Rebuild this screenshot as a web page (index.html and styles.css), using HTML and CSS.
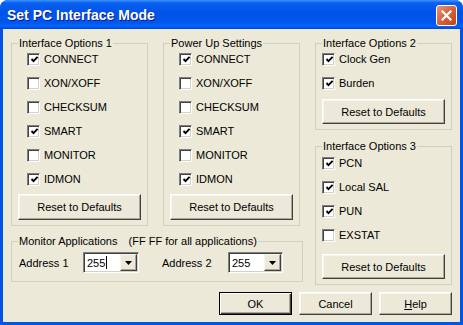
FILE: index.html
```html
<!DOCTYPE html>
<html lang="en">
<head>
    <meta charset="UTF-8">
    <title>Set PC Interface Mode</title>
    <link rel="stylesheet" href="styles.css">
</head>
<body>
    <div class="window">
        <div class="titlebar">
            <span class="title">Set PC Interface Mode</span>
            <button class="close" type="button">
                <svg width="11" height="11" viewBox="0 0 11 11"><path d="M1.5 1.5 L9.5 9.5 M9.5 1.5 L1.5 9.5" stroke="#fff" stroke-width="2.2" stroke-linecap="square"/></svg>
            </button>
        </div>

        <form class="client">
            <div class="main">
                <div class="left">
                    <div class="pair">
                        <fieldset class="group opts">
                            <legend>Interface Options 1</legend>
                            <div class="checks indent">
                                <label class="check"><span class="box on"><svg viewBox="0 0 9 9"><polyline points="1.5,4 3.5,6.2 7.6,1.8" /></svg></span>CONNECT</label>
                                <label class="check"><span class="box"></span>XON/XOFF</label>
                                <label class="check"><span class="box"></span>CHECKSUM</label>
                                <label class="check"><span class="box on"><svg viewBox="0 0 9 9"><polyline points="1.5,4 3.5,6.2 7.6,1.8" /></svg></span>SMART</label>
                                <label class="check"><span class="box"></span>MONITOR</label>
                                <label class="check"><span class="box on"><svg viewBox="0 0 9 9"><polyline points="1.5,4 3.5,6.2 7.6,1.8" /></svg></span>IDMON</label>
                            </div>
                            <button class="btn reset tall" type="button">Reset to Defaults</button>
                        </fieldset>

                        <fieldset class="group opts">
                            <legend>Power Up Settings</legend>
                            <div class="checks indent">
                                <label class="check"><span class="box on"><svg viewBox="0 0 9 9"><polyline points="1.5,4 3.5,6.2 7.6,1.8" /></svg></span>CONNECT</label>
                                <label class="check"><span class="box"></span>XON/XOFF</label>
                                <label class="check"><span class="box"></span>CHECKSUM</label>
                                <label class="check"><span class="box on"><svg viewBox="0 0 9 9"><polyline points="1.5,4 3.5,6.2 7.6,1.8" /></svg></span>SMART</label>
                                <label class="check"><span class="box"></span>MONITOR</label>
                                <label class="check"><span class="box on"><svg viewBox="0 0 9 9"><polyline points="1.5,4 3.5,6.2 7.6,1.8" /></svg></span>IDMON</label>
                            </div>
                            <button class="btn reset tall" type="button">Reset to Defaults</button>
                        </fieldset>
                    </div>

                    <fieldset class="group monitor">
                        <legend>Monitor Applications <span class="hint">(FF FF for all applications)</span></legend>
                        <div class="addr">
                            <span class="addr-label">Address 1</span>
                            <div class="combo">
                                <span class="value">255<span class="caret"></span></span>
                                <span class="drop"><svg width="7" height="4" viewBox="0 0 7 4"><path d="M0 0 H7 L3.5 4 Z" fill="#000"/></svg></span>
                            </div>
                            <span class="addr-label second">Address 2</span>
                            <div class="combo narrow">
                                <span class="value">255</span>
                                <span class="drop"><svg width="7" height="4" viewBox="0 0 7 4"><path d="M0 0 H7 L3.5 4 Z" fill="#000"/></svg></span>
                            </div>
                        </div>
                    </fieldset>
                </div>

                <div class="right">
                    <fieldset class="group">
                        <legend>Interface Options 2</legend>
                        <div class="checks">
                            <label class="check"><span class="box on"><svg viewBox="0 0 9 9"><polyline points="1.5,4 3.5,6.2 7.6,1.8" /></svg></span>Clock Gen</label>
                            <label class="check"><span class="box on"><svg viewBox="0 0 9 9"><polyline points="1.5,4 3.5,6.2 7.6,1.8" /></svg></span>Burden</label>
                        </div>
                        <button class="btn reset" type="button">Reset to Defaults</button>
                    </fieldset>

                    <fieldset class="group lower">
                        <legend>Interface Options 3</legend>
                        <div class="checks">
                            <label class="check"><span class="box on"><svg viewBox="0 0 9 9"><polyline points="1.5,4 3.5,6.2 7.6,1.8" /></svg></span>PCN</label>
                            <label class="check"><span class="box on"><svg viewBox="0 0 9 9"><polyline points="1.5,4 3.5,6.2 7.6,1.8" /></svg></span>Local SAL</label>
                            <label class="check"><span class="box on"><svg viewBox="0 0 9 9"><polyline points="1.5,4 3.5,6.2 7.6,1.8" /></svg></span>PUN</label>
                            <label class="check"><span class="box"></span>EXSTAT</label>
                        </div>
                        <button class="btn reset" type="button">Reset to Defaults</button>
                    </fieldset>
                </div>
            </div>

            <div class="actions">
                <button class="btn action default" type="submit">OK</button>
                <button class="btn action" type="button">Cancel</button>
                <button class="btn action" type="button"><u>H</u>elp</button>
            </div>
        </form>
    </div>
</body>
</html>
```

FILE: styles.css
```css
body {
    margin: 0;
    font-family: 'Liberation Sans', Arial, sans-serif;
    font-size: 11px;
    color: #000;
}

.window {
    width: 463px;
    height: 325px;
    display: flex;
    flex-direction: column;
    background-color: #0055e5;
    border-radius: 8px 8px 0 0;
    box-sizing: border-box;
}

.titlebar {
    height: 29px;
    flex: none;
    display: flex;
    align-items: center;
    padding: 0 6px 0 7px;
    border-radius: 8px 8px 0 0;
    background: linear-gradient(to bottom, #3d95ff 0%, #0a5fef 10%, #0053e8 45%, #0058ee 80%, #0066ff 90%, #0046d5 100%);
}

.title {
    flex: 1;
    color: #fff;
    font-weight: bold;
    font-size: 14px;
    text-shadow: 1px 1px #0a1883;
}

.close {
    width: 21px;
    height: 21px;
    margin-top: 2px;
    padding: 0;
    display: flex;
    align-items: center;
    justify-content: center;
    border: 1px solid #fff;
    border-radius: 3px;
    background: linear-gradient(135deg, #e7977a 0%, #d96540 45%, #c5411c 100%);
}

.client {
    flex: 1;
    margin: 0 3px 3px;
    padding: 8px 8px 7px 8px;
    background-color: #ece9d8;
    display: flex;
    flex-direction: column;
}

.main {
    display: flex;
    align-items: flex-start;
}

.left {
    width: 293px;
    display: flex;
    flex-direction: column;
}

.pair {
    display: flex;
    gap: 15px;
}

.group {
    margin: 0;
    padding: 0 6px 5px;
    border: 1px solid #d0d0bf;
    min-width: 0;
    box-sizing: border-box;
    display: flex;
    flex-direction: column;
}

.group legend {
    padding: 0 1px;
    line-height: 13px;
}

.opts {
    width: 137px;
}

.checks {
    display: flex;
    flex-direction: column;
    gap: 8px;
    padding-top: 1px;
}

.indent {
    padding-left: 9px;
}

.lower .checks {
    padding-top: 2px;
}

.check {
    display: flex;
    align-items: center;
    gap: 4px;
    height: 16px;
}

.box {
    width: 13px;
    height: 13px;
    box-sizing: border-box;
    border: 1px solid;
    border-color: #808080 #fff #fff #808080;
    box-shadow: inset 1px 1px #404040, inset -1px -1px #d4d0c8;
    background-color: #fff;
    display: flex;
    align-items: center;
    justify-content: center;
}

.box svg {
    width: 9px;
    height: 9px;
    margin: 1px 0 0 1px;
}

.box polyline {
    fill: none;
    stroke: #000;
    stroke-width: 1.9;
}

.btn {
    font-family: 'Liberation Sans', Arial, sans-serif;
    font-size: 11px;
    color: #000;
    background-color: #ece9d8;
    padding: 0;
    border: 1px solid;
    border-color: #fff #404040 #404040 #fff;
    box-shadow: inset -1px -1px #aca899, inset 1px 1px #f7f6ee;
}

.reset {
    width: 100%;
    height: 25px;
    margin-top: 8px;
}

.reset.tall {
    height: 26px;
    margin-top: 7px;
}

.lower .reset {
    margin-top: 11px;
}

.right {
    width: 137px;
    margin-left: 11px;
    display: flex;
    flex-direction: column;
}

.lower {
    margin-top: 10px;
}

.monitor {
    width: 292px;
    margin-top: 9px;
    padding-bottom: 8px;
}

.hint {
    margin-left: 8px;
}

.addr {
    display: flex;
    align-items: center;
    height: 21px;
    margin-top: 4px;
}

.addr-label {
    width: 64px;
    padding-left: 1px;
}

.addr-label.second {
    width: 66px;
    padding-left: 0;
    margin-left: 23px;
}

.combo {
    width: 56px;
    height: 21px;
    box-sizing: border-box;
    display: flex;
    align-items: center;
    background-color: #fff;
    border: 1px solid;
    border-color: #808080 #fff #fff #808080;
    box-shadow: inset 1px 1px #404040, inset -1px -1px #d4d0c8;
}

.combo.narrow {
    width: 55px;
}

.value {
    flex: 1;
    display: flex;
    align-items: center;
    padding-left: 3px;
}

.caret {
    width: 1px;
    height: 13px;
    margin-left: 1px;
    background-color: #000;
}

.drop {
    width: 17px;
    height: 17px;
    margin-right: 1px;
    box-sizing: border-box;
    display: flex;
    align-items: center;
    justify-content: center;
    background-color: #ece9d8;
    border: 1px solid;
    border-color: #f7f6ee #404040 #404040 #f7f6ee;
    box-shadow: inset -1px -1px #aca899;
}

.actions {
    display: flex;
    justify-content: flex-end;
    gap: 7px;
    margin-top: 7px;
}

.action {
    width: 73px;
    height: 23px;
}

.action.default {
    border-color: #000;
    box-shadow: inset 1px 1px #fff, inset -1px -1px #404040, inset -2px -2px #aca899;
}
```
